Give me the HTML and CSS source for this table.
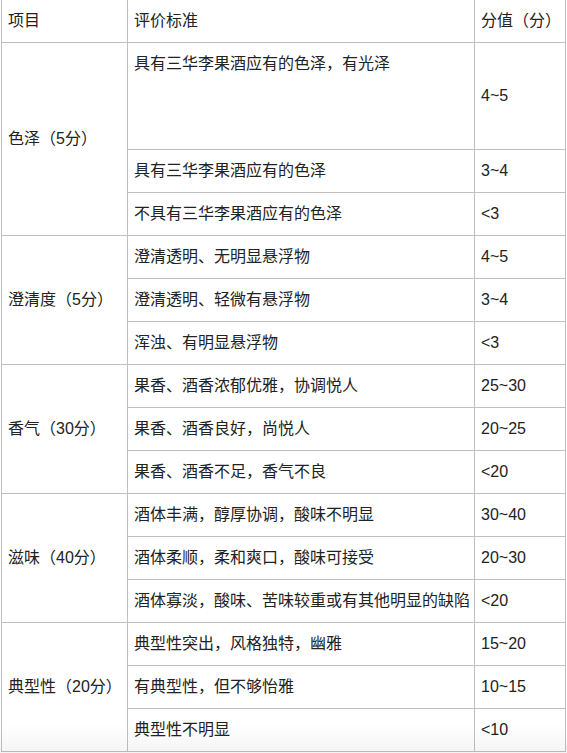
FILE: index.html
```html
<!DOCTYPE html>
<html lang="zh">
<head>
<meta charset="utf-8">
<link rel="stylesheet" href="styles.css">
</head>
<body>
<table class="score">
  <colgroup>
    <col class="c1"><col class="c2"><col class="c3">
  </colgroup>
  <thead>
    <tr><td>项目</td><td>评价标准</td><td>分值（分）</td></tr>
  </thead>
  <tbody>
    <tr class="tall"><td rowspan="3">色泽（5分）</td><td class="top">具有三华李果酒应有的色泽，有光泽</td><td>4~5</td></tr>
    <tr><td>具有三华李果酒应有的色泽</td><td>3~4</td></tr>
    <tr><td>不具有三华李果酒应有的色泽</td><td>&lt;3</td></tr>

    <tr><td rowspan="3">澄清度（5分）</td><td>澄清透明、无明显悬浮物</td><td>4~5</td></tr>
    <tr><td>澄清透明、轻微有悬浮物</td><td>3~4</td></tr>
    <tr><td>浑浊、有明显悬浮物</td><td>&lt;3</td></tr>

    <tr><td rowspan="3">香气（30分）</td><td>果香、酒香浓郁优雅，协调悦人</td><td>25~30</td></tr>
    <tr><td>果香、酒香良好，尚悦人</td><td>20~25</td></tr>
    <tr><td>果香、酒香不足，香气不良</td><td>&lt;20</td></tr>

    <tr><td rowspan="3">滋味（40分）</td><td>酒体丰满，醇厚协调，酸味不明显</td><td>30~40</td></tr>
    <tr><td>酒体柔顺，柔和爽口，酸味可接受</td><td>20~30</td></tr>
    <tr><td>酒体寡淡，酸味、苦味较重或有其他明显的缺陷</td><td>&lt;20</td></tr>

    <tr><td rowspan="3">典型性（20分）</td><td>典型性突出，风格独特，幽雅</td><td>15~20</td></tr>
    <tr><td>有典型性，但不够怡雅</td><td>10~15</td></tr>
    <tr><td>典型性不明显</td><td>&lt;10</td></tr>
  </tbody>
</table>
</body>
</html>
```
FILE: styles.css
```css
html, body {
  margin: 0;
  padding: 0;
  background: #ffffff;
}
body {
  font-family: "Liberation Sans", "Noto Sans CJK SC", sans-serif;
  font-size: 16px;
  color: #222222;
  overflow: hidden;
  height: 753px;
}
body::after {
  content: "";
  position: fixed;
  left: 0;
  right: 0;
  bottom: 0;
  height: 28px;
  background: linear-gradient(to bottom, rgba(0, 0, 0, 0), rgba(0, 0, 0, 0.045));
  pointer-events: none;
}
.score {
  border-collapse: collapse;
  table-layout: fixed;
  width: 564px;
  margin: -1px 0 0 1px;
}
.c1 { width: 126px; }
.c2 { width: 347px; }
.c3 { width: 91px; }
.score td {
  border: 1px solid #c0c0c0;
  padding: 8px 6px;
  line-height: 26px;
  vertical-align: middle;
  white-space: nowrap;
  overflow: hidden;
}
.score tr.tall td.top {
  vertical-align: top;
  height: 90px;
}
```
